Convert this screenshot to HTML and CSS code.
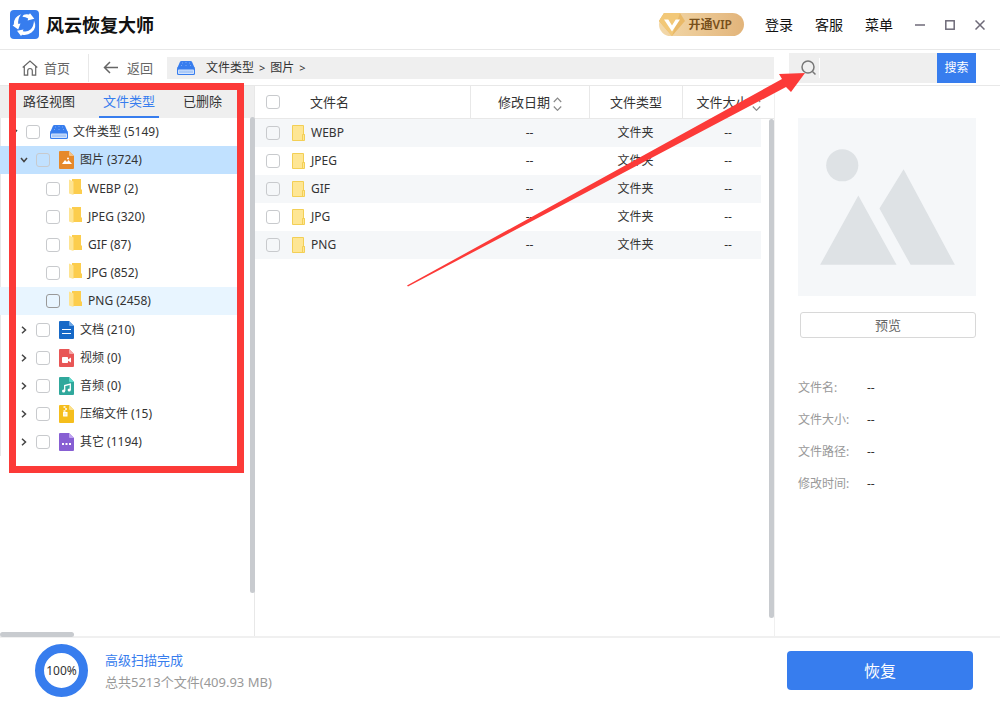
FILE: index.html
```html
<!DOCTYPE html>
<html lang="zh-CN">
<head>
<meta charset="utf-8">
<title>风云恢复大师</title>
<link rel="stylesheet" href="styles.css">
</head>
<body>
<svg class="sprite" aria-hidden="true">
  <symbol id="drive" viewBox="0 0 18 14">
    <path d="M4.500 0h9q1.200 0 1.600 1L17.700 7H.3L2.900 1Q3.300 0 4.500 0z" fill="#377dee"/>
    <rect x="0" y="6" width="18" height="8" rx="1.500" fill="#377dee"/>
    <rect x="1" y="8.500" width="16" height="4.500" rx=".8" fill="#d3e3fc"/>
    <path d="M3 9.500v2.500M5 9.500v2.500M7 9.500v2.500M9 9.500v2.500M11 9.500v2.500M13 9.500v2.500M15 9.500v2.500" stroke="#6fa3f3" stroke-width=".8"/>
    <path d="M5 2h1M8.500 1.500h1M12 2h1M4 4.500h1M8.500 4.500h1M13 4.500h1" stroke="#8bb4f6" stroke-width=".8"/>
  </symbol>
  <symbol id="folder" viewBox="0 0 13 16">
    <path d="M3 0h9v10.500h1V15H3z" fill="#fccd4d"/>
    <path d="M0 0.500l4.500 2V16L0 14.500z" fill="#fee492"/>
  </symbol>
  <symbol id="folder-flat" viewBox="0 0 13 16">
    <path d="M.5.500h11v9h1v6H.5z" fill="#fee694" stroke="#f3cf55"/>
    <path d="M10.500 15V9.500h2" fill="none" stroke="#f3cf55"/>
  </symbol>
  <symbol id="chev-down" viewBox="0 0 8 8"><path d="M1 2l3 3.500L7 2" fill="none" stroke="#444" stroke-width="1.500"/></symbol>
  <symbol id="chev-right" viewBox="0 0 8 8"><path d="M2 .8L5.500 4 2 7.200" fill="none" stroke="#444" stroke-width="1.500"/></symbol>
  <symbol id="sort" viewBox="0 0 9 14"><path d="M.8 5L4.500 1.200 8.200 5M.8 9.500l3.700 3.800 3.700-3.800" fill="none" stroke="#888" stroke-width="1.200"/></symbol>
</svg>
<div class="window">
  <header class="titlebar">
    <svg class="logo" viewBox="0 0 29 29">
      <rect width="29" height="29" rx="4" fill="#377dee"/>
      <g fill="#fff">
        <path d="M11 4.300Q3.500 7 3.800 14.500L2.600 15.500 8.200 19.500 10.500 13.500 8.300 14.100Q7.500 9 11 4.300z"/>
        <path d="M12.500 6.800Q13.500 3.600 19 4.600L20 3.300 24.300 8.800 17.600 10.600 18.200 8.600Q15.500 6.800 12.500 6.800z"/>
        <path d="M24 10.500Q27.500 18 21.500 22.500 17.500 25.800 12 24.700L11 26 7 20.800 13.500 19.400 12.800 21.200Q17 22.500 20.500 19.500 23.800 16.500 24 10.500z"/>
      </g>
    </svg>
    <h1 class="app-name">风云恢复大师</h1>
    <button class="vip" type="button">
      <svg class="vip-gem" viewBox="0 0 26 23">
        <path d="M5 0h16l5 8-13 15L0 8z" fill="#e9b968"/>
        <path d="M5 0h16l-8 23L0 8z" fill="#f2c878"/>
        <path d="M5 6.500h4.300L13 12.500l3.700-6H21L13 18.500z" fill="#fff"/>
      </svg>
      开通VIP
    </button>
    <nav class="menu">
      <button type="button">登录</button>
      <button type="button">客服</button>
      <button type="button">菜单</button>
    </nav>
    <div class="win-controls">
      <button type="button" aria-label="最小化"><svg viewBox="0 0 10 10"><path d="M0 5h10" stroke="#6e6a78" stroke-width="1.500"/></svg></button>
      <button type="button" aria-label="最大化"><svg viewBox="0 0 10 10"><rect x=".8" y=".8" width="8.400" height="8.400" fill="none" stroke="#6e6a78" stroke-width="1.500"/></svg></button>
      <button type="button" aria-label="关闭"><svg viewBox="0 0 10 10"><path d="M.5.500l9 9M9.500.500l-9 9" stroke="#6e6a78" stroke-width="1.500"/></svg></button>
    </div>
  </header>

  <div class="toolbar">
    <button class="tool home" type="button">
      <svg viewBox="0 0 16 16"><path d="M.7 7.500L8 1l7.300 6.500M2.300 6.500v8.700h3.400v-4.400a2.300 2.300 0 0 1 4.600 0v4.400h3.400V6.500" fill="none" stroke="#666" stroke-width="1.200"/></svg>
      首页
    </button>
    <button class="tool back" type="button">
      <svg viewBox="0 0 16 16"><path d="M15 7.500H2M7 2L1.500 7.500 7 13" fill="none" stroke="#666" stroke-width="1.500"/></svg>
      返回
    </button>
    <nav class="crumbs">
      <svg class="drive"><use href="#drive"/></svg>
      <span>文件类型</span><span class="sep">&gt;</span><span>图片</span><span class="sep">&gt;</span>
    </nav>
    <form class="search">
      <svg class="glass" viewBox="0 0 16 16"><circle cx="7" cy="7" r="6" fill="none" stroke="#777" stroke-width="1.500"/><path d="M11.500 11.500l3 3" stroke="#777" stroke-width="1.500"/></svg>
      <input type="text" aria-label="搜索">
      <button type="button">搜索</button>
    </form>
  </div>

  <div class="main">
    <aside class="sidebar">
      <div class="tabs" role="tablist">
        <button type="button" role="tab">路径视图</button>
        <button type="button" role="tab" class="active" aria-selected="true">文件类型</button>
        <button type="button" role="tab">已删除</button>
      </div>
      <ul class="tree">
        <li>
          <label class="row root"><svg class="chev"><use href="#chev-down"/></svg><input type="checkbox"><svg class="drive"><use href="#drive"/></svg>文件类型 (5149)</label>
          <ul>
            <li>
              <label class="row type selected"><svg class="chev"><use href="#chev-down"/></svg><input type="checkbox"><svg class="ftype" viewBox="0 0 15 18"><path d="M1 0h9l5 5v12q0 1-1 1H1q-1 0-1-1V1q0-1 1-1z" fill="#e6892b"/><path d="M10 0l5 5h-4q-1 0-1-1z" fill="#f6c184"/><path d="M3 13l3-4 2 2 1.500-2L13 13z" fill="#fff"/><circle cx="9" cy="7.500" r="1" fill="#fff"/></svg>图片 (3724)</label>
              <ul class="children">
                <li><label class="row leaf"><input type="checkbox"><svg class="folder"><use href="#folder"/></svg>WEBP (2)</label></li>
                <li><label class="row leaf"><input type="checkbox"><svg class="folder"><use href="#folder"/></svg>JPEG (320)</label></li>
                <li><label class="row leaf"><input type="checkbox"><svg class="folder"><use href="#folder"/></svg>GIF (87)</label></li>
                <li><label class="row leaf"><input type="checkbox"><svg class="folder"><use href="#folder"/></svg>JPG (852)</label></li>
                <li><label class="row leaf hover"><input type="checkbox"><svg class="folder"><use href="#folder"/></svg>PNG (2458)</label></li>
              </ul>
            </li>
            <li><label class="row type"><svg class="chev"><use href="#chev-right"/></svg><input type="checkbox"><svg class="ftype" viewBox="0 0 15 18"><path d="M1 0h9l5 5v12q0 1-1 1H1q-1 0-1-1V1q0-1 1-1z" fill="#1769c7"/><path d="M10 0l5 5h-4q-1 0-1-1z" fill="#6aa5e6"/><path d="M3 8.500h9M3 12.500h9" stroke="#fff" stroke-width="1.200"/></svg>文档 (210)</label></li>
            <li><label class="row type"><svg class="chev"><use href="#chev-right"/></svg><input type="checkbox"><svg class="ftype" viewBox="0 0 15 18"><path d="M1 0h9l5 5v12q0 1-1 1H1q-1 0-1-1V1q0-1 1-1z" fill="#e85656"/><path d="M10 0l5 5h-4q-1 0-1-1z" fill="#f5a5a5"/><rect x="3" y="8" width="6" height="6" rx=".8" fill="#fff"/><path d="M9 10.500L12 8.500v5L9 11.800z" fill="#fff"/></svg>视频 (0)</label></li>
            <li><label class="row type"><svg class="chev"><use href="#chev-right"/></svg><input type="checkbox"><svg class="ftype" viewBox="0 0 15 18"><path d="M1 0h9l5 5v12q0 1-1 1H1q-1 0-1-1V1q0-1 1-1z" fill="#30a89c"/><path d="M10 0l5 5h-4q-1 0-1-1z" fill="#58dccb"/><path d="M5.700 14V8.500l5.600-1.500v6" fill="none" stroke="#fff" stroke-width="1.300"/><circle cx="4.600" cy="14" r="1.600" fill="#fff"/><circle cx="10.200" cy="13" r="1.600" fill="#fff"/></svg>音频 (0)</label></li>
            <li><label class="row type"><svg class="chev"><use href="#chev-right"/></svg><input type="checkbox"><svg class="ftype" viewBox="0 0 15 18"><path d="M1 0h9l5 5v12q0 1-1 1H1q-1 0-1-1V1q0-1 1-1z" fill="#f5be1d"/><path d="M10 0l5 5h-4q-1 0-1-1z" fill="#fbe08a"/><path d="M4.500 2h2M6 4h2M4.500 6h2" stroke="#fff" stroke-width="1.400"/><rect x="4.600" y="7.500" width="3.400" height="3.500" fill="#fef3cf" stroke="#fff"/></svg>压缩文件 (15)</label></li>
            <li><label class="row type"><svg class="chev"><use href="#chev-right"/></svg><input type="checkbox"><svg class="ftype" viewBox="0 0 15 18"><path d="M1 0h9l5 5v12q0 1-1 1H1q-1 0-1-1V1q0-1 1-1z" fill="#875fd3"/><path d="M10 0l5 5h-4q-1 0-1-1z" fill="#bfa2f2"/><path d="M3 11h2M6.500 11h2M10 11h2" stroke="#fff" stroke-width="1.800"/></svg>其它 (1194)</label></li>
          </ul>
        </li>
      </ul>
      <div class="thumb-v side-thumb"></div>
      <div class="thumb-h"></div>
    </aside>

    <section class="files">
      <table>
        <thead>
          <tr>
            <th class="c-check"><input type="checkbox" aria-label="全选"></th>
            <th class="c-name">文件名</th>
            <th class="c-date">修改日期<svg class="sort"><use href="#sort"/></svg></th>
            <th class="c-type">文件类型</th>
            <th class="c-size">文件大小<svg class="sort"><use href="#sort"/></svg></th>
          </tr>
        </thead>
        <tbody>
          <tr><td class="c-check"><input type="checkbox" aria-label="WEBP"></td><td><span class="fname"><svg class="folder"><use href="#folder-flat"/></svg>WEBP</span></td><td>--</td><td>文件夹</td><td>--</td></tr>
          <tr><td class="c-check"><input type="checkbox" aria-label="JPEG"></td><td><span class="fname"><svg class="folder"><use href="#folder-flat"/></svg>JPEG</span></td><td>--</td><td>文件夹</td><td>--</td></tr>
          <tr><td class="c-check"><input type="checkbox" aria-label="GIF"></td><td><span class="fname"><svg class="folder"><use href="#folder-flat"/></svg>GIF</span></td><td>--</td><td>文件夹</td><td>--</td></tr>
          <tr><td class="c-check"><input type="checkbox" aria-label="JPG"></td><td><span class="fname"><svg class="folder"><use href="#folder-flat"/></svg>JPG</span></td><td>--</td><td>文件夹</td><td>--</td></tr>
          <tr><td class="c-check"><input type="checkbox" aria-label="PNG"></td><td><span class="fname"><svg class="folder"><use href="#folder-flat"/></svg>PNG</span></td><td>--</td><td>文件夹</td><td>--</td></tr>
        </tbody>
      </table>
      <div class="rail"><div class="thumb-v"></div></div>
    </section>

    <aside class="details">
      <svg class="picture" viewBox="0 0 177 177">
        <rect width="177" height="177" fill="#f5f7f9"/>
        <g fill="#dee2e5"><circle cx="44" cy="47" r="16"/><path d="M22 146L60 77l38 69zM105 51l51 95h-44L81 90z"/></g>
      </svg>
      <button class="preview" type="button">预览</button>
      <dl>
        <dt>文件名:</dt><dd>--</dd>
        <dt>文件大小:</dt><dd>--</dd>
        <dt>文件路径:</dt><dd>--</dd>
        <dt>修改时间:</dt><dd>--</dd>
      </dl>
    </aside>
  </div>

  <footer class="status">
    <div class="ring">100%</div>
    <div class="summary">
      <p class="done">高级扫描完成</p>
      <p>总共5213个文件(409.93 MB)</p>
    </div>
    <button class="recover" type="button">恢复</button>
  </footer>

  <div class="mark-box"></div>
  <svg class="mark-arrow" viewBox="0 0 400 216"><path d="M0 213.500L375 7 372 2 398 1 384 20 379 15 1 214.500z" fill="#fc3a38"/></svg>
</div>
</body>
</html>
```

FILE: styles.css
```css
* { box-sizing: border-box; }
body, h1, p, ul, dl, dd { margin: 0; padding: 0; }
ul { list-style: none; }
body {
  font: 12px/18px "Noto Sans", "Noto Sans CJK SC", sans-serif;
  color: #333;
  background: #fff;
}
button, input { font: inherit; color: inherit; }
button { border: 0; background: none; padding: 0; }
svg { display: block; flex: none; }
.sprite { position: absolute; width: 0; height: 0; }

.window {
  position: relative;
  display: flex;
  flex-direction: column;
  min-height: 100vh;
}

input[type="checkbox"] {
  appearance: none;
  flex: none;
  display: block;
  width: 14px;
  height: 14px;
  margin: 0;
  border: 1px solid #c8cacd;
  border-radius: 3px;
}
.drive { width: 18px; height: 14px; }
.folder { width: 13px; height: 16px; }

/* title bar */
.titlebar {
  display: flex;
  align-items: center;
  height: 50px;
  padding: 0 15px 0 10px;
  border-bottom: 1px solid #e8e8e8;
}
.logo { width: 29px; height: 29px; }
.app-name {
  margin: 0 auto 0 7px;
  font-size: 18px;
  line-height: 24px;
  font-weight: 700;
  color: #111;
}
.vip {
  display: flex;
  align-items: center;
  gap: 4px;
  height: 23px;
  padding-right: 12px;
  border-radius: 12px;
  background: linear-gradient(90deg, #f3d9aa, #e2b47a);
  font-weight: 600;
  color: #77501c;
}
.vip-gem { width: 26px; height: 23px; }
.menu { display: flex; gap: 22px; margin-left: 21px; font-size: 14px; color: #111; }
.win-controls { display: flex; gap: 20px; margin-left: 22px; }
.win-controls svg { width: 10px; height: 10px; }

/* toolbar */
.toolbar {
  display: flex;
  align-items: center;
  height: 36px;
  padding-right: 24px;
  border-bottom: 1px solid #e8e8e8;
}
.tool {
  display: flex;
  align-items: center;
  height: 28px;
  font-size: 13px;
  color: #666;
}
.tool svg { width: 16px; height: 16px; }
.home { gap: 6px; width: 89px; padding-left: 22px; border-right: 1px solid #e8e8e8; }
.back { gap: 8px; width: 78px; padding-left: 14px; }
.crumbs {
  flex: 1;
  display: flex;
  align-items: center;
  gap: 5px;
  height: 22px;
  padding-left: 10px;
  background: #efefef;
}
.crumbs .drive { margin-right: 6px; }
.sep { font-size: 11px; }
.search { display: flex; align-items: center; height: 30px; margin-left: 15px; background: #efefef; }
.glass { width: 16px; height: 16px; margin: 0 2px 0 12px; }
.search input {
  width: 118px;
  height: 20px;
  padding: 0 4px;
  border: 0;
  border-left: 1px solid #fff;
  background: none;
}
.search button { width: 39px; height: 30px; background: #377dee; color: #fff; }

/* body */
.main { flex: 1; display: flex; }
.sidebar { position: relative; width: 255px; border-right: 1px solid #e8e8e8; }
.tabs {
  display: flex;
  gap: 20px;
  height: 32px;
  padding-left: 19px;
  background: #efefef;
  font-size: 13px;
}
.tabs button { padding: 0 4px; border-bottom: 2px solid transparent; }
.tabs .active { border-color: #377dee; color: #377dee; }
.tree { border-left: 1px solid #e8e8e8; }
.row {
  display: flex;
  align-items: center;
  height: 28px;
  margin-right: 14px;
}
.chev { width: 8px; height: 8px; margin-right: 8px; }
.row .drive { margin: 0 5px 0 10px; }
.row .ftype { width: 15px; height: 18px; margin: 0 6px 0 9px; }
.row .folder { margin: 0 6px 4px 9px; }
.root { padding-left: 9px; }
.type { padding-left: 19px; }
.leaf { padding-left: 45px; }
.children { padding: 1px 0; }
.selected, .hover { margin-left: -1px; }
.selected { padding-left: 20px; background: #c1e1ff; }
.hover { padding-left: 46px; background: #e8f5ff; }
.hover input { border-color: #999; }

.thumb-v { width: 5px; border-radius: 3px; background: #c8cbcf; }
.side-thumb { position: absolute; top: 31px; right: -1px; bottom: 43px; }
.thumb-h {
  position: absolute;
  left: 0;
  bottom: -1px;
  width: 74px;
  height: 5px;
  border-radius: 3px;
  background: #c8cbcf;
}

/* file list */
.files { position: relative; flex: 1; border-right: 1px solid #f0f0f0; }
table { width: 100%; border-collapse: separate; border-spacing: 0; table-layout: fixed; }
th, td { padding: 0; text-align: center; font-weight: 400; }
th { height: 33px; border-bottom: 1px solid #e8e8e8; font-size: 13px; }
th + th + th { border-left: 1px solid #e8e8e8; }
td { height: 28px; }
tbody tr:nth-child(odd) { background: #f5f7f9; }
.c-check { width: 37px; padding-left: 11px; }
.c-name { padding-left: 18px; text-align: left; }
.c-date { width: 119px; }
.c-type { width: 93px; }
.c-size { width: 92px; }
.sort { display: inline-block; width: 9px; height: 14px; margin-left: 3px; vertical-align: middle; }
.fname { display: flex; align-items: center; gap: 6px; }
.rail {
  position: absolute;
  top: 33px;
  right: 0;
  bottom: 18px;
  display: flex;
  justify-content: flex-end;
  width: 13px;
  background: #fff;
}

/* details */
.details { width: 225px; padding: 32px 24px 0 23px; }
.picture { width: 100%; }
.preview {
  display: block;
  width: 176px;
  height: 26px;
  margin: 16px 0 0 auto;
  border: 1px solid #d8d8d8;
  border-radius: 3px;
  font-size: 13px;
  color: #666;
}
dl {
  display: grid;
  grid-template-columns: 69px 1fr;
  row-gap: 14px;
  margin-top: 41px;
}
dt { color: #999; }

/* status bar */
.status {
  display: flex;
  align-items: center;
  height: 67px;
  padding: 0 27px 0 35px;
  border-top: 2px solid #f0f0f0;
}
.ring {
  display: grid;
  place-items: center;
  width: 53px;
  height: 53px;
  border: 9px solid #377dee;
  border-radius: 50%;
}
.summary { margin: 0 auto 0 17px; font-size: 13px; line-height: 22px; color: #999; }
.done { color: #377dee; }
.recover {
  width: 186px;
  height: 39px;
  border-radius: 4px;
  background: #377dee;
  font-size: 16px;
  color: #fff;
}

/* annotations drawn over the window */
.mark-box {
  position: absolute;
  left: 9px;
  top: 83px;
  width: 235px;
  height: 390px;
  border: 7px solid #fc3a38;
  pointer-events: none;
}
.mark-arrow {
  position: absolute;
  left: 407px;
  top: 72px;
  width: 400px;
  height: 216px;
  pointer-events: none;
}
```
